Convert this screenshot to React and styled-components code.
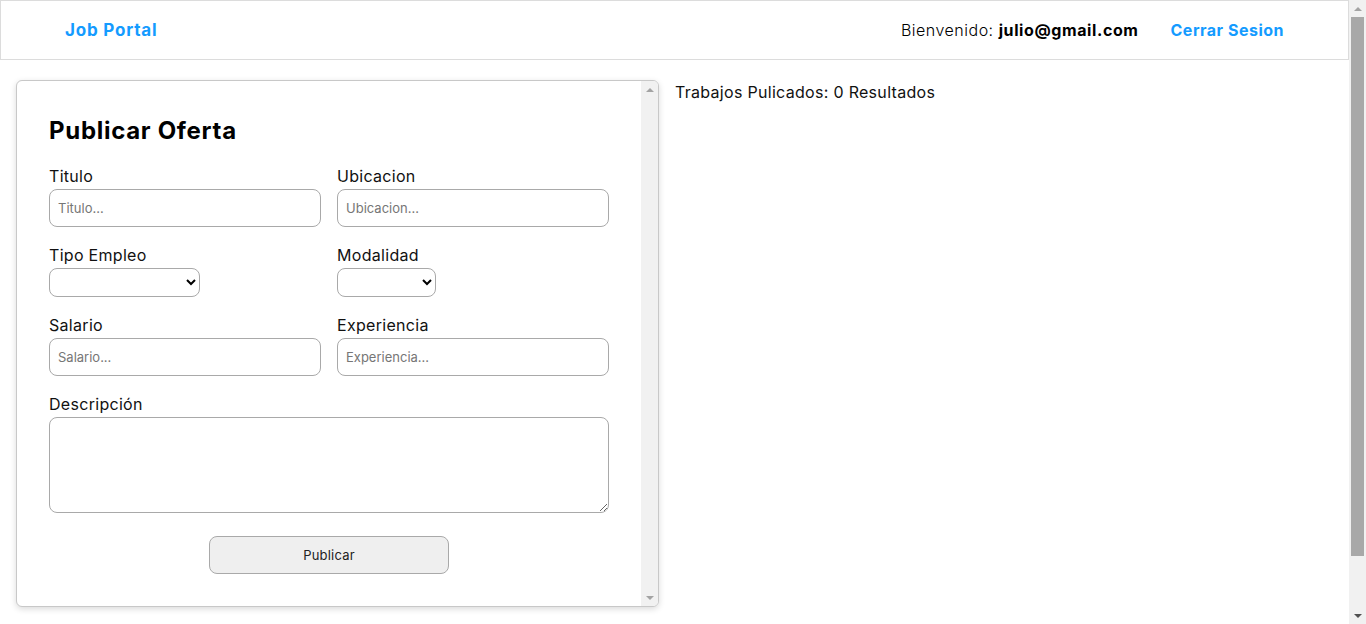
import React from "react";
import styled, { createGlobalStyle } from "styled-components";

const GlobalStyle = createGlobalStyle`
  html, body {
    margin: 0;
    padding: 0;
    background: #fff;
    font-family: "Inter", "Open Sans", sans-serif;
    color: #111;
  }
  * {
    box-sizing: border-box;
  }
`;

const Shell = styled.div`
  display: flex;
  height: 100vh;
  overflow: hidden;
`;

const Page = styled.div`
  flex: 1;
  min-width: 0;
`;

// scrollbar look-alike (classic chrome style)
const Rail = styled.div`
  width: 17px;
  flex-shrink: 0;
  background: #f1f1f1;
  display: flex;
  flex-direction: column;
  align-items: stretch;
`;

const RailButton = styled.div`
  height: 17px;
  display: flex;
  align-items: center;
  justify-content: center;
  color: ${(p) => p.$color};
`;

const Thumb = styled.div`
  height: ${(p) => p.$h}px;
  margin: 0 2px;
  background: #a8a8a8;
`;

const Spacer = styled.div`
  flex: 1;
`;

const Arrow = ({ down }) => (
  <svg width="8" height="4" viewBox="0 0 8 4" style={{ display: "block" }}>
    <polygon
      points={down ? "0,0 8,0 4,4" : "0,4 8,4 4,0"}
      fill="currentColor"
    />
  </svg>
);

const Header = styled.header`
  height: 60px;
  border: 1px solid #dcdcdc;
  display: flex;
  align-items: center;
  justify-content: space-between;
  padding: 0 64px 0 64px;
  background: #fff;
`;

const Brand = styled.a`
  font-size: 17px;
  font-weight: 700;
  color: #149bff;
  text-decoration: none;
  letter-spacing: 0.8px;
`;

const UserBox = styled.div`
  display: flex;
  align-items: center;
  gap: 32px;
  font-size: 16px;
`;

const Welcome = styled.span`
  font-weight: 300;
  color: #000;
  letter-spacing: 0.5px;
  b {
    font-weight: 700;
    letter-spacing: 0.6px;
  }
`;

const Logout = styled.a`
  font-weight: 700;
  color: #149bff;
  text-decoration: none;
  font-size: 16px;
  letter-spacing: 0.5px;
`;

const Main = styled.main`
  display: flex;
  align-items: flex-start;
  gap: 16px;
  padding: 20px 16px;
`;

const Card = styled.section`
  width: 643px;
  flex-shrink: 0;
  display: flex;
  border: 1px solid #c8c8c8;
  border-radius: 6px;
  box-shadow: 0 2px 6px rgba(0, 0, 0, 0.15);
  background: #fff;
  overflow: hidden;
`;

const Form = styled.form`
  flex: 1;
  padding: 32px;
  display: flex;
  flex-direction: column;
`;

const Title = styled.h2`
  margin: 0 0 16px 0;
  font-size: 24px;
  line-height: 35px;
  font-weight: 700;
  color: #000;
  letter-spacing: 0.7px;
`;

const Grid = styled.div`
  display: grid;
  grid-template-columns: 1fr 1fr;
  column-gap: 16px;
  row-gap: 16px;
`;

const Field = styled.div`
  display: flex;
  flex-direction: column;
  align-items: flex-start;
  grid-column: ${(p) => (p.$wide ? "1 / -1" : "auto")};
`;

const Label = styled.label`
  font-size: 16px;
  line-height: 24px;
  margin-bottom: 1px;
  color: #111;
  letter-spacing: 0.3px;
`;

const Input = styled.input`
  width: 100%;
  height: 38px;
  border: 1px solid #a9a9a9;
  border-radius: 8px;
  padding: 0 8px;
  font-family: inherit;
  font-size: 13px;
  &::placeholder {
    color: #767676;
  }
`;

const Select = styled.select`
  width: ${(p) => p.$w}px;
  height: 29px;
  border: 1px solid #a9a9a9;
  border-radius: 8px;
  background: #fff;
  font-family: inherit;
  font-size: 13px;
`;

const TextArea = styled.textarea`
  display: block;
  width: 100%;
  height: 96px;
  border: 1px solid #a9a9a9;
  border-radius: 8px;
  padding: 8px;
  font-family: inherit;
  resize: both;
`;

const ButtonRow = styled.div`
  display: flex;
  justify-content: center;
  margin-top: 23px;
`;

const Button = styled.button`
  width: 240px;
  height: 38px;
  background: #efefef;
  border: 1px solid #a9a9a9;
  border-radius: 8px;
  font-family: inherit;
  font-size: 13px;
  color: #222;
  letter-spacing: 0.2px;
`;

const Results = styled.p`
  margin: 0;
  font-size: 16px;
  line-height: 24px;
  color: #111;
  letter-spacing: 0.3px;
`;

export default function App() {
  return (
    <>
      <GlobalStyle />
      <Shell>
        <Page>
          <Header>
            <Brand href="#">Job Portal</Brand>
            <UserBox>
              <Welcome>
                Bienvenido: <b>julio@gmail.com</b>
              </Welcome>
              <Logout href="#">Cerrar Sesion</Logout>
            </UserBox>
          </Header>
          <Main>
            <Card>
              <Form onSubmit={(e) => e.preventDefault()}>
                <Title>Publicar Oferta</Title>
                <Grid>
                  <Field>
                    <Label>Titulo</Label>
                    <Input placeholder="Titulo..." />
                  </Field>
                  <Field>
                    <Label>Ubicacion</Label>
                    <Input placeholder="Ubicacion..." />
                  </Field>
                  <Field>
                    <Label>Tipo Empleo</Label>
                    <Select $w={151} />
                  </Field>
                  <Field>
                    <Label>Modalidad</Label>
                    <Select $w={99} />
                  </Field>
                  <Field>
                    <Label>Salario</Label>
                    <Input placeholder="Salario..." />
                  </Field>
                  <Field>
                    <Label>Experiencia</Label>
                    <Input placeholder="Experiencia..." />
                  </Field>
                  <Field $wide>
                    <Label>Descripción</Label>
                    <TextArea />
                  </Field>
                </Grid>
                <ButtonRow>
                  <Button type="submit">Publicar</Button>
                </ButtonRow>
              </Form>
              <Rail>
                <RailButton $color="#a3a3a3">
                  <Arrow />
                </RailButton>
                <Spacer />
                <RailButton $color="#a3a3a3">
                  <Arrow down />
                </RailButton>
              </Rail>
            </Card>
            <Results>Trabajos Pulicados: 0 Resultados</Results>
          </Main>
        </Page>
        <Rail>
          <RailButton $color="#a3a3a3">
            <Arrow />
          </RailButton>
          <Thumb $h={539} />
          <Spacer />
          <RailButton $color="#505050">
            <Arrow down />
          </RailButton>
        </Rail>
      </Shell>
    </>
  );
}
